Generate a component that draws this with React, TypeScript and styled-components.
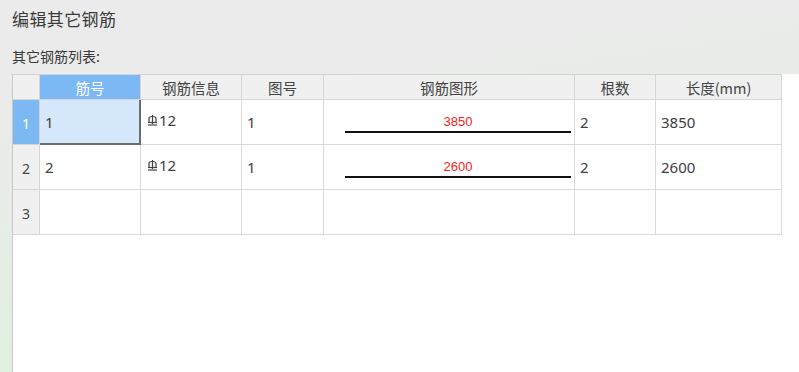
import * as React from "react";
import styled, { createGlobalStyle } from "styled-components";

const GlobalStyle = createGlobalStyle`
  html, body {
    margin: 0;
    padding: 0;
    width: 799px;
    height: 372px;
    overflow: hidden;
  }
  body {
    font-family: "Noto Sans CJK SC", "Noto Sans", sans-serif;
    color: #333;
  }
`;

const Page = styled.div`
  width: 799px;
  height: 372px;
  display: flex;
  flex-direction: column;
  box-sizing: border-box;
  padding-left: 12px;
  background: linear-gradient(172deg, #ebebeb 0%, #e9ebe9 35%, #dcf3db 100%);
`;

const Title = styled.div`
  font-size: 17px;
  letter-spacing: 0.4px;
  color: #3a3a3a;
  height: 38px;
  line-height: 38px;
`;

const Caption = styled.div`
  font-size: 14px;
  color: #3a3a3a;
  height: 36px;
  line-height: 36px;
`;

const Panel = styled.div`
  flex: 1;
  background: #fff;
  border-left: 1px solid #c9c9c9;
`;

const Grid = styled.div`
  display: grid;
  grid-template-columns: 27px 101px 101px 82px 251px 81px 126px;
  grid-template-rows: 26px 45px 45px 45px;
  width: 769px;
`;

const Head = styled.div<{ $active?: boolean }>`
  display: flex;
  align-items: center;
  justify-content: center;
  box-sizing: border-box;
  border-top: 1px solid #d3d3d3;
  border-right: 1px solid #d6d6d6;
  border-bottom: 1px solid #d6d6d6;
  background: ${(p) => (p.$active ? "#7cb8f4" : "#f0f0f0")};
  color: ${(p) => (p.$active ? "#fff" : "#444")};
  font-size: 14.5px;
`;

const RowHead = styled.div<{ $active?: boolean }>`
  display: flex;
  align-items: center;
  justify-content: center;
  box-sizing: border-box;
  border-right: 1px solid #d6d6d6;
  border-bottom: 1px solid #d6d6d6;
  background: ${(p) => (p.$active ? "#7cb8f4" : "#f0f0f0")};
  color: ${(p) => (p.$active ? "#fff" : "#444")};
  font-family: "Noto Sans", sans-serif;
  font-size: 14px;
  padding-top: 2px;
`;

const Cell = styled.div<{ $selected?: boolean; $top?: boolean }>`
  display: flex;
  align-items: ${(p) => (p.$top ? "flex-start" : "center")};
  box-sizing: border-box;
  padding: ${(p) => (p.$top ? "10px 0 0 6px" : "0 0 0 5px")};
  border-right: ${(p) => (p.$selected ? "2px solid #6d6d6d" : "1px solid #dadada")};
  border-bottom: ${(p) => (p.$selected ? "2px solid #6d6d6d" : "1px solid #dadada")};
  background: ${(p) => (p.$selected ? "#d5e8fc" : "#fff")};
  color: #404040;
  font-family: "Noto Sans", "Noto Sans CJK SC", sans-serif;
  font-size: 15px;
`;

const ShapeCell = styled.div`
  display: flex;
  flex-direction: column;
  align-items: flex-end;
  box-sizing: border-box;
  padding: 14px 3px 0 0;
  border-right: 1px solid #dadada;
  border-bottom: 1px solid #dadada;
`;

const Bar = styled.div`
  width: 226px;
  display: flex;
  flex-direction: column;
  align-items: center;
`;

const Dim = styled.span`
  font-family: "Liberation Sans", Arial, sans-serif;
  font-size: 13px;
  color: #f01e23;
  line-height: 16px;
`;

const Line = styled.div`
  margin-top: 1px;
  width: 100%;
  height: 2px;
  background: #111;
`;

const Steel = () => (
  <svg width="11" height="11" viewBox="0 0 11 11" style={{ marginRight: 1 }}>
    <path d="M2 7.5 V3.5 Q2 1.5 5.5 1.5 Q9 1.5 9 3.5 V7.5" fill="none" stroke="#444" strokeWidth="1.2" />
    <line x1="5.5" y1="0" x2="5.5" y2="9" stroke="#444" strokeWidth="1.2" />
    <line x1="1" y1="7.5" x2="10" y2="7.5" stroke="#444" strokeWidth="1.2" />
    <line x1="1" y1="10" x2="10" y2="10" stroke="#444" strokeWidth="1.2" />
  </svg>
);

const Info = styled.span`
  display: inline-flex;
  align-items: center;
`;

type Row = { no: string; id: string; fig: string; len: string; count: string };

const rows: Row[] = [
  { no: "1", id: "1", fig: "1", len: "3850", count: "2" },
  { no: "2", id: "2", fig: "1", len: "2600", count: "2" },
];

const headers = ["筋号", "钢筋信息", "图号", "钢筋图形", "根数", "长度(mm)"];

export default function App() {
  return (
    <>
      <GlobalStyle />
      <Page>
        <Title>编辑其它钢筋</Title>
        <Caption>其它钢筋列表:</Caption>
        <Panel>
          <Grid>
            <Head />
            {headers.map((h, i) => (
              <Head key={h} $active={i === 0}>
                {h}
              </Head>
            ))}
            {rows.map((r, i) => (
              <React.Fragment key={r.no}>
                <RowHead $active={i === 0}>{r.no}</RowHead>
                <Cell $selected={i === 0}>{r.id}</Cell>
                <Cell $top>
                  <Info>
                    <Steel />
                    12
                  </Info>
                </Cell>
                <Cell>{r.fig}</Cell>
                <ShapeCell>
                  <Bar>
                    <Dim>{r.len}</Dim>
                    <Line />
                  </Bar>
                </ShapeCell>
                <Cell>{r.count}</Cell>
                <Cell>{r.len}</Cell>
              </React.Fragment>
            ))}
            <RowHead>3</RowHead>
            <Cell />
            <Cell />
            <Cell />
            <Cell />
            <Cell />
            <Cell />
          </Grid>
        </Panel>
      </Page>
    </>
  );
}
